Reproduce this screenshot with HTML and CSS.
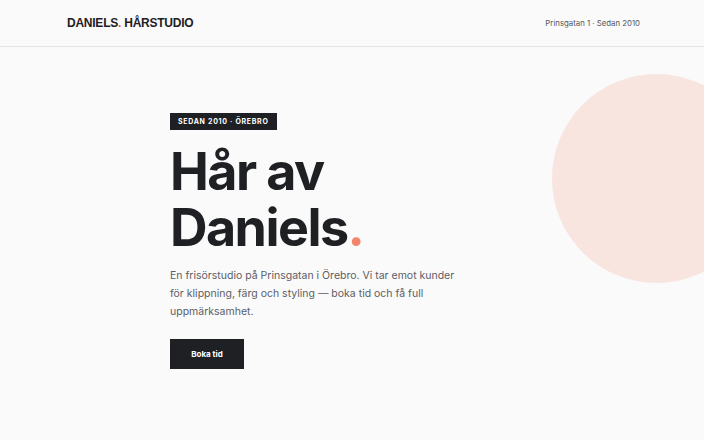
FILE: index.html
```html
<!DOCTYPE html>
<html lang="sv">
<head>
<meta charset="utf-8">
<title>Daniels. Hårstudio</title>
<link rel="stylesheet" href="styles.css">
</head>
<body>
<header class="site-header">
  <div class="logo">DANIELS<span class="dot">.</span> HÅRSTUDIO</div>
  <div class="meta">Prinsgatan 1 · Sedan 2010</div>
</header>
<main class="hero">
  <div class="blob" aria-hidden="true"></div>
  <div class="hero-inner">
    <span class="badge">SEDAN 2010 · ÖREBRO</span>
    <h1 class="title">Hår av<br>Daniels<span class="accent">.</span></h1>
    <p class="lead">En frisörstudio på Prinsgatan i Örebro. Vi tar emot kunder för klippning, färg och styling — boka tid och få full uppmärksamhet.</p>
    <a class="btn" href="#">Boka tid</a>
  </div>
</main>
</body>
</html>
```
FILE: styles.css
```css
* { box-sizing: border-box; }

html, body {
  margin: 0;
  height: 100%;
}

body {
  background: #fafafa;
  color: #1f2024;
  font-family: "Inter", "Liberation Sans", sans-serif;
  overflow: hidden;
}

.site-header {
  display: flex;
  align-items: center;
  justify-content: space-between;
  height: 47px;
  padding: 0 64px 0 67px;
  border-bottom: 1px solid #e4e4e6;
}

.logo {
  font-family: "Liberation Sans", sans-serif;
  font-weight: 700;
  font-size: 12px;
  letter-spacing: -0.02em;
  color: #1f2024;
}

.logo .dot { color: #e0664f; }

.meta {
  font-size: 7.8px;
  color: #55565c;
}

.hero {
  position: relative;
  height: calc(100% - 47px);
  overflow: hidden;
}

.blob {
  position: absolute;
  left: 552px;
  top: 27px;
  width: 209px;
  height: 209px;
  border-radius: 50%;
  background: #f8e5e0;
}

.hero-inner {
  position: relative;
  padding: 66px 0 0 170px;
  display: flex;
  flex-direction: column;
  align-items: flex-start;
}

.badge {
  display: inline-block;
  background: #1f2024;
  color: #fff;
  font-size: 7px;
  font-weight: 700;
  letter-spacing: 0.1em;
  padding: 5px 8px 5px 8px;
  line-height: 7px;
}

.title {
  margin: 14px 0 0 0;
  font-size: 52px;
  line-height: 56px;
  font-weight: 700;
  letter-spacing: -0.03em;
  color: #1f2024;
}

.title .accent { color: #f4856a; }

.lead {
  margin: 11px 0 0 0;
  width: 300px;
  font-size: 10.5px;
  line-height: 18px;
  color: #5c5d66;
}

.btn {
  display: inline-flex;
  align-items: center;
  justify-content: center;
  margin-top: 18px;
  width: 74px;
  height: 30px;
  background: #1f2024;
  color: #fff;
  font-size: 8px;
  font-weight: 700;
  text-decoration: none;
}
```
